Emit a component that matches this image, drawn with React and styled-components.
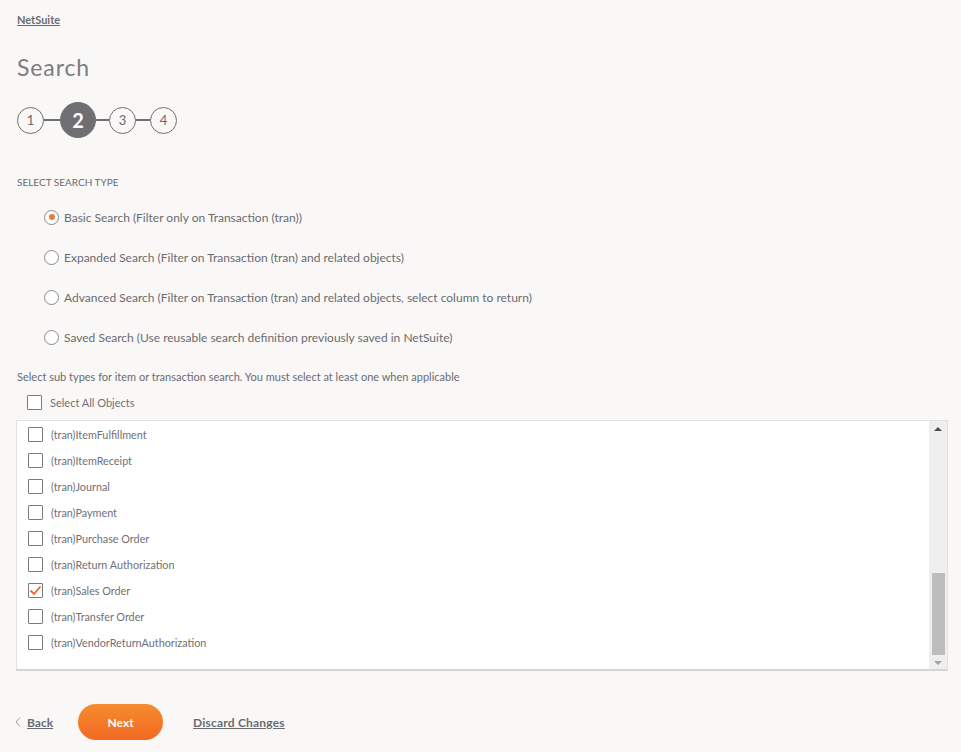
import React from "react";
import styled, { createGlobalStyle } from "styled-components";

const Global = createGlobalStyle`
  html, body { margin: 0; padding: 0; background: #f9f8f7; }
  body { font-family: Lato, "Open Sans", Arial, sans-serif; color: #6b6b70; }
  * { box-sizing: border-box; }
`;

const Page = styled.div`
  width: 961px;
  height: 752px;
  padding: 13px 14px 0 16px;
  display: flex;
  flex-direction: column;
`;

const Crumb = styled.a`
  align-self: flex-start;
  margin-left: 1px;
  font-size: 11px;
  font-weight: 700;
  color: #6b6b70;
  text-decoration: underline;
  line-height: 14px;
`;

const Title = styled.h1`
  margin: 27px 0 0 1px;
  font-size: 23px;
  letter-spacing: 0.9px;
  font-weight: 400;
  color: #7c7c81;
  line-height: 26px;
`;

const Stepper = styled.div`
  display: flex;
  align-items: center;
  margin: 22px 0 0 1px;
`;

const Step = styled.div`
  width: ${p => (p.$active ? 36 : 27)}px;
  height: ${p => (p.$active ? 36 : 27)}px;
  border-radius: 50%;
  border: 1.5px solid #6e6e73;
  background: ${p => (p.$active ? "#6e6e73" : "transparent")};
  color: ${p => (p.$active ? "#fff" : "#6b6b70")};
  font-size: ${p => (p.$active ? 20 : 13)}px;
  font-weight: ${p => (p.$active ? 700 : 400)};
  display: flex;
  align-items: center;
  justify-content: center;
  flex-shrink: 0;
`;

const Line = styled.div`
  width: ${p => p.$w}px;
  height: 1.5px;
  background: #6e6e73;
`;

const SectionLabel = styled.div`
  margin: 38px 0 0 1px;
  font-size: 10px;
  text-transform: uppercase;
  color: #6b6b70;
  line-height: 12px;
`;

const RadioGroup = styled.div`
  display: flex;
  flex-direction: column;
  margin: 21px 0 0 28px;
  gap: 24px;
`;

const RadioRow = styled.label`
  display: flex;
  align-items: center;
  gap: 5px;
  height: 16px;
  font-size: 12px;
  color: #6b6b70;
`;

const RadioCircle = styled.span`
  width: 15px;
  height: 15px;
  border-radius: 50%;
  border: 1px solid #8a8a8e;
  background: #fff;
  display: flex;
  align-items: center;
  justify-content: center;
  flex-shrink: 0;
  &::after {
    content: "";
    width: 6px;
    height: 6px;
    border-radius: 50%;
    background: ${p => (p.$on ? "#f07a33" : "transparent")};
  }
`;

const Hint = styled.div`
  margin: 25px 0 0 1px;
  font-size: 11px;
  line-height: 13px;
  color: #6b6b70;
`;

const CheckRow = styled.label`
  display: flex;
  align-items: center;
  gap: 8px;
  height: 26px;
  font-size: 10.8px;
  color: #707075;
`;

const SelectAll = styled(CheckRow)`
  margin: 6px 0 0 11px;
  font-size: 11px;
  gap: 8px;
`;

const Box = styled.span`
  width: 15px;
  height: 15px;
  border: 1.5px solid #7a7a7e;
  border-radius: 1px;
  background: #fff;
  display: flex;
  align-items: center;
  justify-content: center;
  flex-shrink: 0;
`;

const Panel = styled.div`
  margin-top: 5px;
  width: 932px;
  height: 251px;
  background: #fff;
  border: 1px solid #e2e1df;
  border-bottom: 2px solid #d6d5d3;
  display: flex;
`;

const Items = styled.div`
  flex: 1;
  display: flex;
  flex-direction: column;
  padding: 0 0 0 11px;
`;

const Scrollbar = styled.div`
  width: 18px;
  background: #efefef;
  display: flex;
  flex-direction: column;
  align-items: center;
  padding: 6px 0 4px;
`;

const Arrow = styled.div`
  width: 0;
  height: 0;
  border-left: 4px solid transparent;
  border-right: 4px solid transparent;
  ${p =>
    p.$up
      ? "border-bottom: 4px solid #505050;"
      : "border-top: 4px solid #a3a3a3;"}
`;

const Spacer = styled.div`
  flex: 1;
`;

const Thumb = styled.div`
  width: 13px;
  height: 82px;
  background: #bdbdbd;
  margin-bottom: 6px;
`;

const Footer = styled.div`
  display: flex;
  align-items: center;
  margin-top: 33px;
`;

const BackLink = styled.a`
  display: flex;
  align-items: center;
  gap: 6px;
  margin-left: -1px;
  font-size: 12px;
  font-weight: 700;
  color: #6b6b70;
  text-decoration: underline;
`;

const NextButton = styled.button`
  margin-left: 25px;
  width: 85px;
  height: 36px;
  border: none;
  border-radius: 18px;
  background: linear-gradient(#f68c30, #f26922);
  color: #fff;
  font-family: inherit;
  font-size: 12px;
  font-weight: 700;
`;

const Discard = styled.a`
  margin-left: 30px;
  font-size: 12px;
  letter-spacing: 0.2px;
  font-weight: 700;
  color: #6b6b70;
  text-decoration: underline;
`;

const Check = () => (
  <svg width="13" height="11" viewBox="0 0 13 11">
    <path d="M1.5 5.5 L5 9 L11.5 1.5" fill="none" stroke="#f0652a" strokeWidth="1.8" />
  </svg>
);

const radios = [
  "Basic Search (Filter only on Transaction (tran))",
  "Expanded Search (Filter on Transaction (tran) and related objects)",
  "Advanced Search (Filter on Transaction (tran) and related objects, select column to return)",
  "Saved Search (Use reusable search definition previously saved in NetSuite)",
];

const items = [
  "(tran)ItemFulfillment",
  "(tran)ItemReceipt",
  "(tran)Journal",
  "(tran)Payment",
  "(tran)Purchase Order",
  "(tran)Return Authorization",
  "(tran)Sales Order",
  "(tran)Transfer Order",
  "(tran)VendorReturnAuthorization",
];

export default function App() {
  return (
    <>
      <Global />
      <Page>
        <Crumb>NetSuite</Crumb>
        <Title>Search</Title>
        <Stepper>
          <Step>1</Step>
          <Line $w={16} />
          <Step $active>2</Step>
          <Line $w={13} />
          <Step>3</Step>
          <Line $w={14} />
          <Step>4</Step>
        </Stepper>
        <SectionLabel>Select Search Type</SectionLabel>
        <RadioGroup>
          {radios.map((r, i) => (
            <RadioRow key={r}>
              <RadioCircle $on={i === 0} />
              {r}
            </RadioRow>
          ))}
        </RadioGroup>
        <Hint>Select sub types for item or transaction search. You must select at least one when applicable</Hint>
        <SelectAll>
          <Box />
          Select All Objects
        </SelectAll>
        <Panel>
          <Items>
            {items.map(it => (
              <CheckRow key={it}>
                <Box>{it === "(tran)Sales Order" && <Check />}</Box>
                {it}
              </CheckRow>
            ))}
          </Items>
          <Scrollbar>
            <Arrow $up />
            <Spacer />
            <Thumb />
            <Arrow />
          </Scrollbar>
        </Panel>
        <Footer>
          <BackLink>
            <svg width="6" height="10" viewBox="0 0 6 10">
              <path d="M5 0.5 L1 5 L5 9.5" fill="none" stroke="#9a9a9e" strokeWidth="1" />
            </svg>
            Back
          </BackLink>
          <NextButton>Next</NextButton>
          <Discard>Discard Changes</Discard>
        </Footer>
      </Page>
    </>
  );
}
